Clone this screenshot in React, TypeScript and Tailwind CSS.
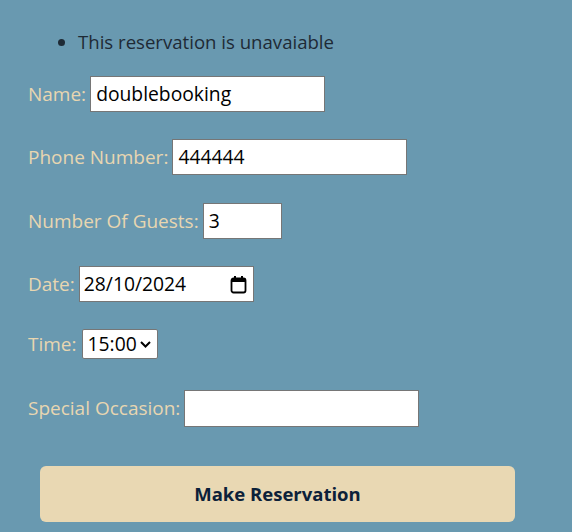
import React from "react";

export default function App() {
  return (
    <div
      className="w-[572px] h-[532px] bg-[#6999b0] overflow-hidden"
      style={{ fontFamily: '"Open Sans", "Noto Sans", sans-serif' }}
    >
      <ul className="list-disc pl-[78px] pt-[30px] h-[54px] text-[18.6px] leading-[24px] text-[#1e2a35] m-0">
        <li>This reservation is unavaiable</li>
      </ul>
      <div className="flex flex-col pl-[28px] text-[19px] text-[#e8d6b0]">
        <div className="flex items-center h-[36px] mt-[22px]">
          <span>Name:</span>
          <div className="ml-[4px] w-[235px] h-[36px] bg-white border border-[#767676] flex items-center px-[5px] text-[19.3px] text-black">doublebooking</div>
        </div>
        <div className="flex items-center h-[36px] mt-[27px]">
          <span>Phone Number:</span>
          <div className="ml-[4px] w-[235px] h-[36px] bg-white border border-[#767676] flex items-center px-[5px] text-[19.3px] text-black">444444</div>
        </div>
        <div className="flex items-center h-[36px] mt-[28px]">
          <span>Number Of Guests:</span>
          <div className="ml-[4px] w-[79px] h-[36px] bg-white border border-[#767676] flex items-center px-[5px] text-[19.3px] text-black">3</div>
        </div>
        <div className="flex items-center h-[36px] mt-[27px]">
          <span>Date:</span>
          <div className="ml-[4px] w-[175px] h-[36px] bg-white border border-[#767676] flex items-center justify-between pl-[4px] pr-[6px] text-[19.3px] text-black">
            <span>28/10/2024</span>
            <svg width="17" height="19" viewBox="0 0 17 19" fill="none">
              <rect x="1.5" y="3.5" width="14" height="14" rx="2" stroke="black" strokeWidth="1.8" />
              <rect x="1.5" y="3.5" width="14" height="3.5" fill="black" />
              <rect x="4" y="1" width="2" height="3" fill="black" />
              <rect x="11" y="1" width="2" height="3" fill="black" />
            </svg>
          </div>
        </div>
        <div className="flex items-center h-[30px] mt-[27px]">
          <span>Time:</span>
          <div className="ml-[5px] w-[76px] h-[30px] bg-white border border-[#767676] flex items-center justify-between pl-[5px] pr-[6px] text-[19.3px] text-black rounded-[2px]">
            <span>15:00</span>
            <svg width="11" height="7" viewBox="0 0 11 7" fill="none">
              <path d="M1 1l4.5 4.5L10 1" stroke="black" strokeWidth="2" />
            </svg>
          </div>
        </div>
        <div className="flex items-center h-[37px] mt-[31px]">
          <span>Special Occasion:</span>
          <div className="ml-[4px] w-[235px] h-[37px] bg-white border border-[#767676]"></div>
        </div>
      </div>
      <div className="pl-[40px] mt-[39px]">
        <button className="w-[475px] h-[56px] rounded-[6px] bg-[#e9d8b3] text-[#0c2139] font-bold text-[18.5px]">
          Make Reservation
        </button>
      </div>
    </div>
  );
}
